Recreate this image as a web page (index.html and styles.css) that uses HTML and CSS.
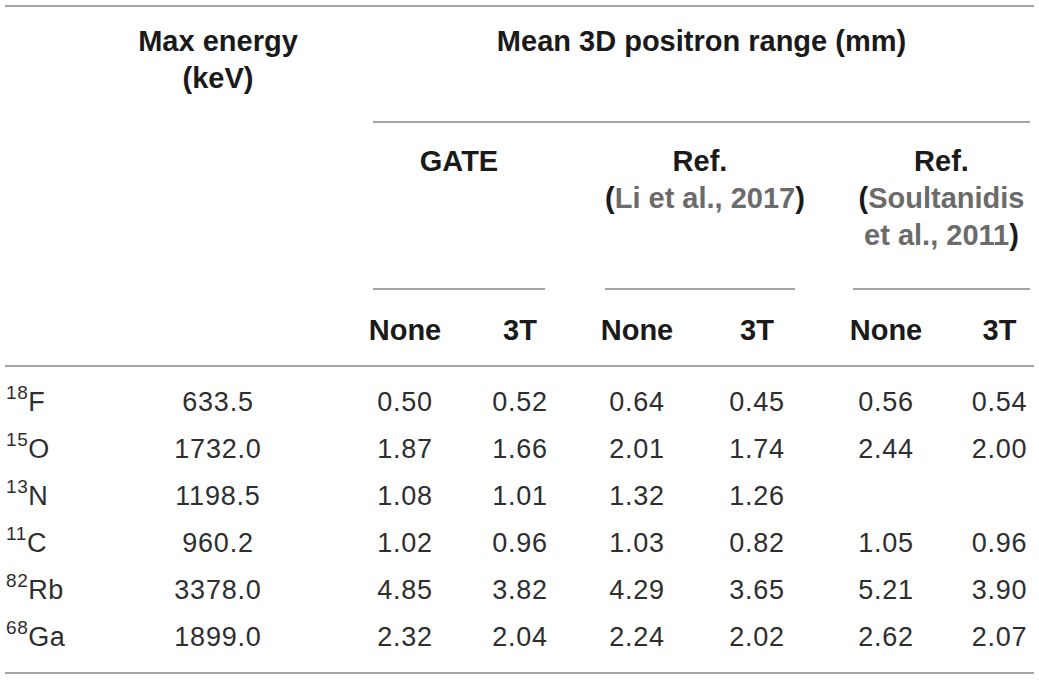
FILE: index.html
```html
<!DOCTYPE html>
<html>
<head>
<meta charset="utf-8">
<link rel="stylesheet" href="styles.css">
</head>
<body>
<div class="table">
  <div class="thead">
    <div class="h-blank"></div>
    <div class="h-energy">Max energy<br>(keV)</div>
    <div class="h-mean">Mean 3D positron range (mm)</div>
    <div class="h-group g-gate">GATE</div>
    <div class="h-group g-li">Ref.<br>(<span class="cite">Li et al., 2017</span>)</div>
    <div class="h-group g-soul">Ref.<br>(<span class="cite">Soultanidis</span><br><span class="cite">et al., 2011</span>)</div>
    <div class="h-sub c3">None</div>
    <div class="h-sub c4">3T</div>
    <div class="h-sub c5">None</div>
    <div class="h-sub c6">3T</div>
    <div class="h-sub c7">None</div>
    <div class="h-sub c8">3T</div>
  </div>
  <div class="tbody">
    <div class="nuc"><sup>18</sup>F</div><div class="num">633.5</div><div class="num">0.50</div><div class="num">0.52</div><div class="num">0.64</div><div class="num">0.45</div><div class="num">0.56</div><div class="num">0.54</div>
    <div class="nuc"><sup>15</sup>O</div><div class="num">1732.0</div><div class="num">1.87</div><div class="num">1.66</div><div class="num">2.01</div><div class="num">1.74</div><div class="num">2.44</div><div class="num">2.00</div>
    <div class="nuc"><sup>13</sup>N</div><div class="num">1198.5</div><div class="num">1.08</div><div class="num">1.01</div><div class="num">1.32</div><div class="num">1.26</div><div class="num"></div><div class="num"></div>
    <div class="nuc"><sup>11</sup>C</div><div class="num">960.2</div><div class="num">1.02</div><div class="num">0.96</div><div class="num">1.03</div><div class="num">0.82</div><div class="num">1.05</div><div class="num">0.96</div>
    <div class="nuc"><sup>82</sup>Rb</div><div class="num">3378.0</div><div class="num">4.85</div><div class="num">3.82</div><div class="num">4.29</div><div class="num">3.65</div><div class="num">5.21</div><div class="num">3.90</div>
    <div class="nuc"><sup>68</sup>Ga</div><div class="num">1899.0</div><div class="num">2.32</div><div class="num">2.04</div><div class="num">2.24</div><div class="num">2.02</div><div class="num">2.62</div><div class="num">2.07</div>
  </div>
</div>
</body>
</html>
```

FILE: styles.css
```css
html, body {
  margin: 0;
  padding: 0;
  background: #ffffff;
}

body {
  font-family: "Liberation Sans", Arial, Helvetica, sans-serif;
  color: #1c1c1c;
}

.table {
  margin: 5px 5px 0 5px;
  width: 1029px;
}

.thead,
.tbody {
  display: grid;
  grid-template-columns: 94px 238px 136px 94px 140px 100px 158px 69px;
}

.thead {
  border-top: 2px solid #a3a3a3;
  border-bottom: 2px solid #a3a3a3;
  font-weight: bold;
  font-size: 29px;
  line-height: 37px;
  text-align: center;
  color: #1a1a1a;
}

.h-blank {
  grid-column: 1;
  grid-row: 1 / span 3;
}

.h-energy {
  grid-column: 2;
  grid-row: 1 / span 3;
  padding-top: 16px;
}

.h-mean {
  grid-column: 3 / span 6;
  grid-row: 1;
  margin: 0 4px 0 36px;
  padding: 16px 0 61px 0;
  border-bottom: 2px solid #a3a3a3;
}

.h-group {
  grid-row: 2;
  padding: 20px 0 34px 0;
  border-bottom: 2px solid #a3a3a3;
  white-space: nowrap;
}

.g-gate {
  grid-column: 3 / span 2;
  margin: 0 22px 0 36px;
}

.g-li {
  grid-column: 5 / span 2;
  margin: 0 12px 0 38px;
}

.g-soul {
  grid-column: 7 / span 2;
  margin: 0 4px 0 46px;
}

.cite {
  color: #6b6b6b;
}

.h-sub {
  grid-row: 3;
  padding: 22px 0 16px 0;
}

.c3 { grid-column: 3; }
.c4 { grid-column: 4; }
.c5 { grid-column: 5; }
.c6 { grid-column: 6; }
.c7 { grid-column: 7; }
.c8 { grid-column: 8; }

.tbody {
  grid-auto-rows: 47px;
  padding: 12px 0 11px 0;
  border-bottom: 2px solid #a3a3a3;
  font-size: 27px;
  line-height: 47px;
  color: #2e2e2e;
}

.num {
  text-align: center;
  letter-spacing: 0.8px;
}

.nuc {
  text-align: left;
  letter-spacing: 0.5px;
}

.nuc sup {
  font-size: 19px;
  line-height: 0;
  vertical-align: 12px;
  letter-spacing: 0.6px;
  margin-left: 1px;
}
```
